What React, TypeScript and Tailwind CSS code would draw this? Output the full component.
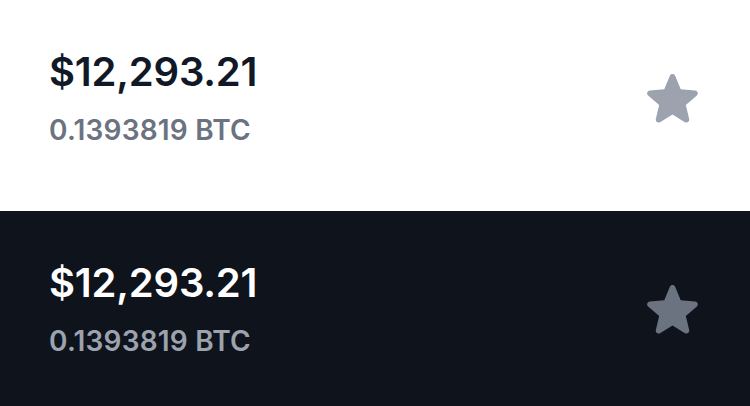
import React from "react";

const StarIcon = ({ className }: { className: string }) => (
  <svg viewBox="0 0 20 20" fill="currentColor" className={className} aria-hidden="true">
    <path
      fillRule="evenodd"
      d="M10.868 2.884c-.321-.772-1.415-.772-1.736 0l-1.83 4.401-4.753.381c-.833.067-1.171 1.107-.536 1.651l3.62 3.102-1.106 4.637c-.194.813.691 1.456 1.405 1.02L10 15.591l4.069 2.485c.713.436 1.598-.207 1.404-1.02l-1.106-4.637 3.62-3.102c.635-.544.297-1.584-.536-1.65l-4.752-.382-1.831-4.401z"
      clipRule="evenodd"
    />
  </svg>
);

const BalanceRow = ({ dark }: { dark?: boolean }) => (
  <div
    className={
      dark
        ? "h-[195px] bg-[#0f131c] pl-[49px] pr-[47px] pt-[44px]"
        : "h-[211px] bg-white pl-[49px] pr-[47px] pt-[44px]"
    }
  >
    <div className="flex items-center justify-between">
      <div className="flex flex-col gap-[10px]">
        <p
          className={
            dark
              ? "text-[40px] leading-[56px] font-semibold tracking-[-0.2px] text-white"
              : "text-[40px] leading-[56px] font-semibold tracking-[-0.2px] text-[#111827]"
          }
        >
          $12,293.21
        </p>
        <p
          className={
            dark
              ? "text-[28px] leading-[40px] font-semibold tracking-[0.2px] text-[#9ca3af]"
              : "text-[28px] leading-[40px] font-semibold tracking-[0.2px] text-[#6b7280]"
          }
        >
          0.1393819 BTC
        </p>
      </div>
      <StarIcon className={dark ? "w-[61px] h-[61px] text-[#6b7280]" : "w-[61px] h-[61px] text-[#9ca3af]"} />
    </div>
  </div>
);

const App = () => {
  return (
    <div className="w-[750px] h-[406px] flex flex-col font-['Inter',sans-serif]">
      <BalanceRow />
      <BalanceRow dark />
    </div>
  );
};

export default App;
